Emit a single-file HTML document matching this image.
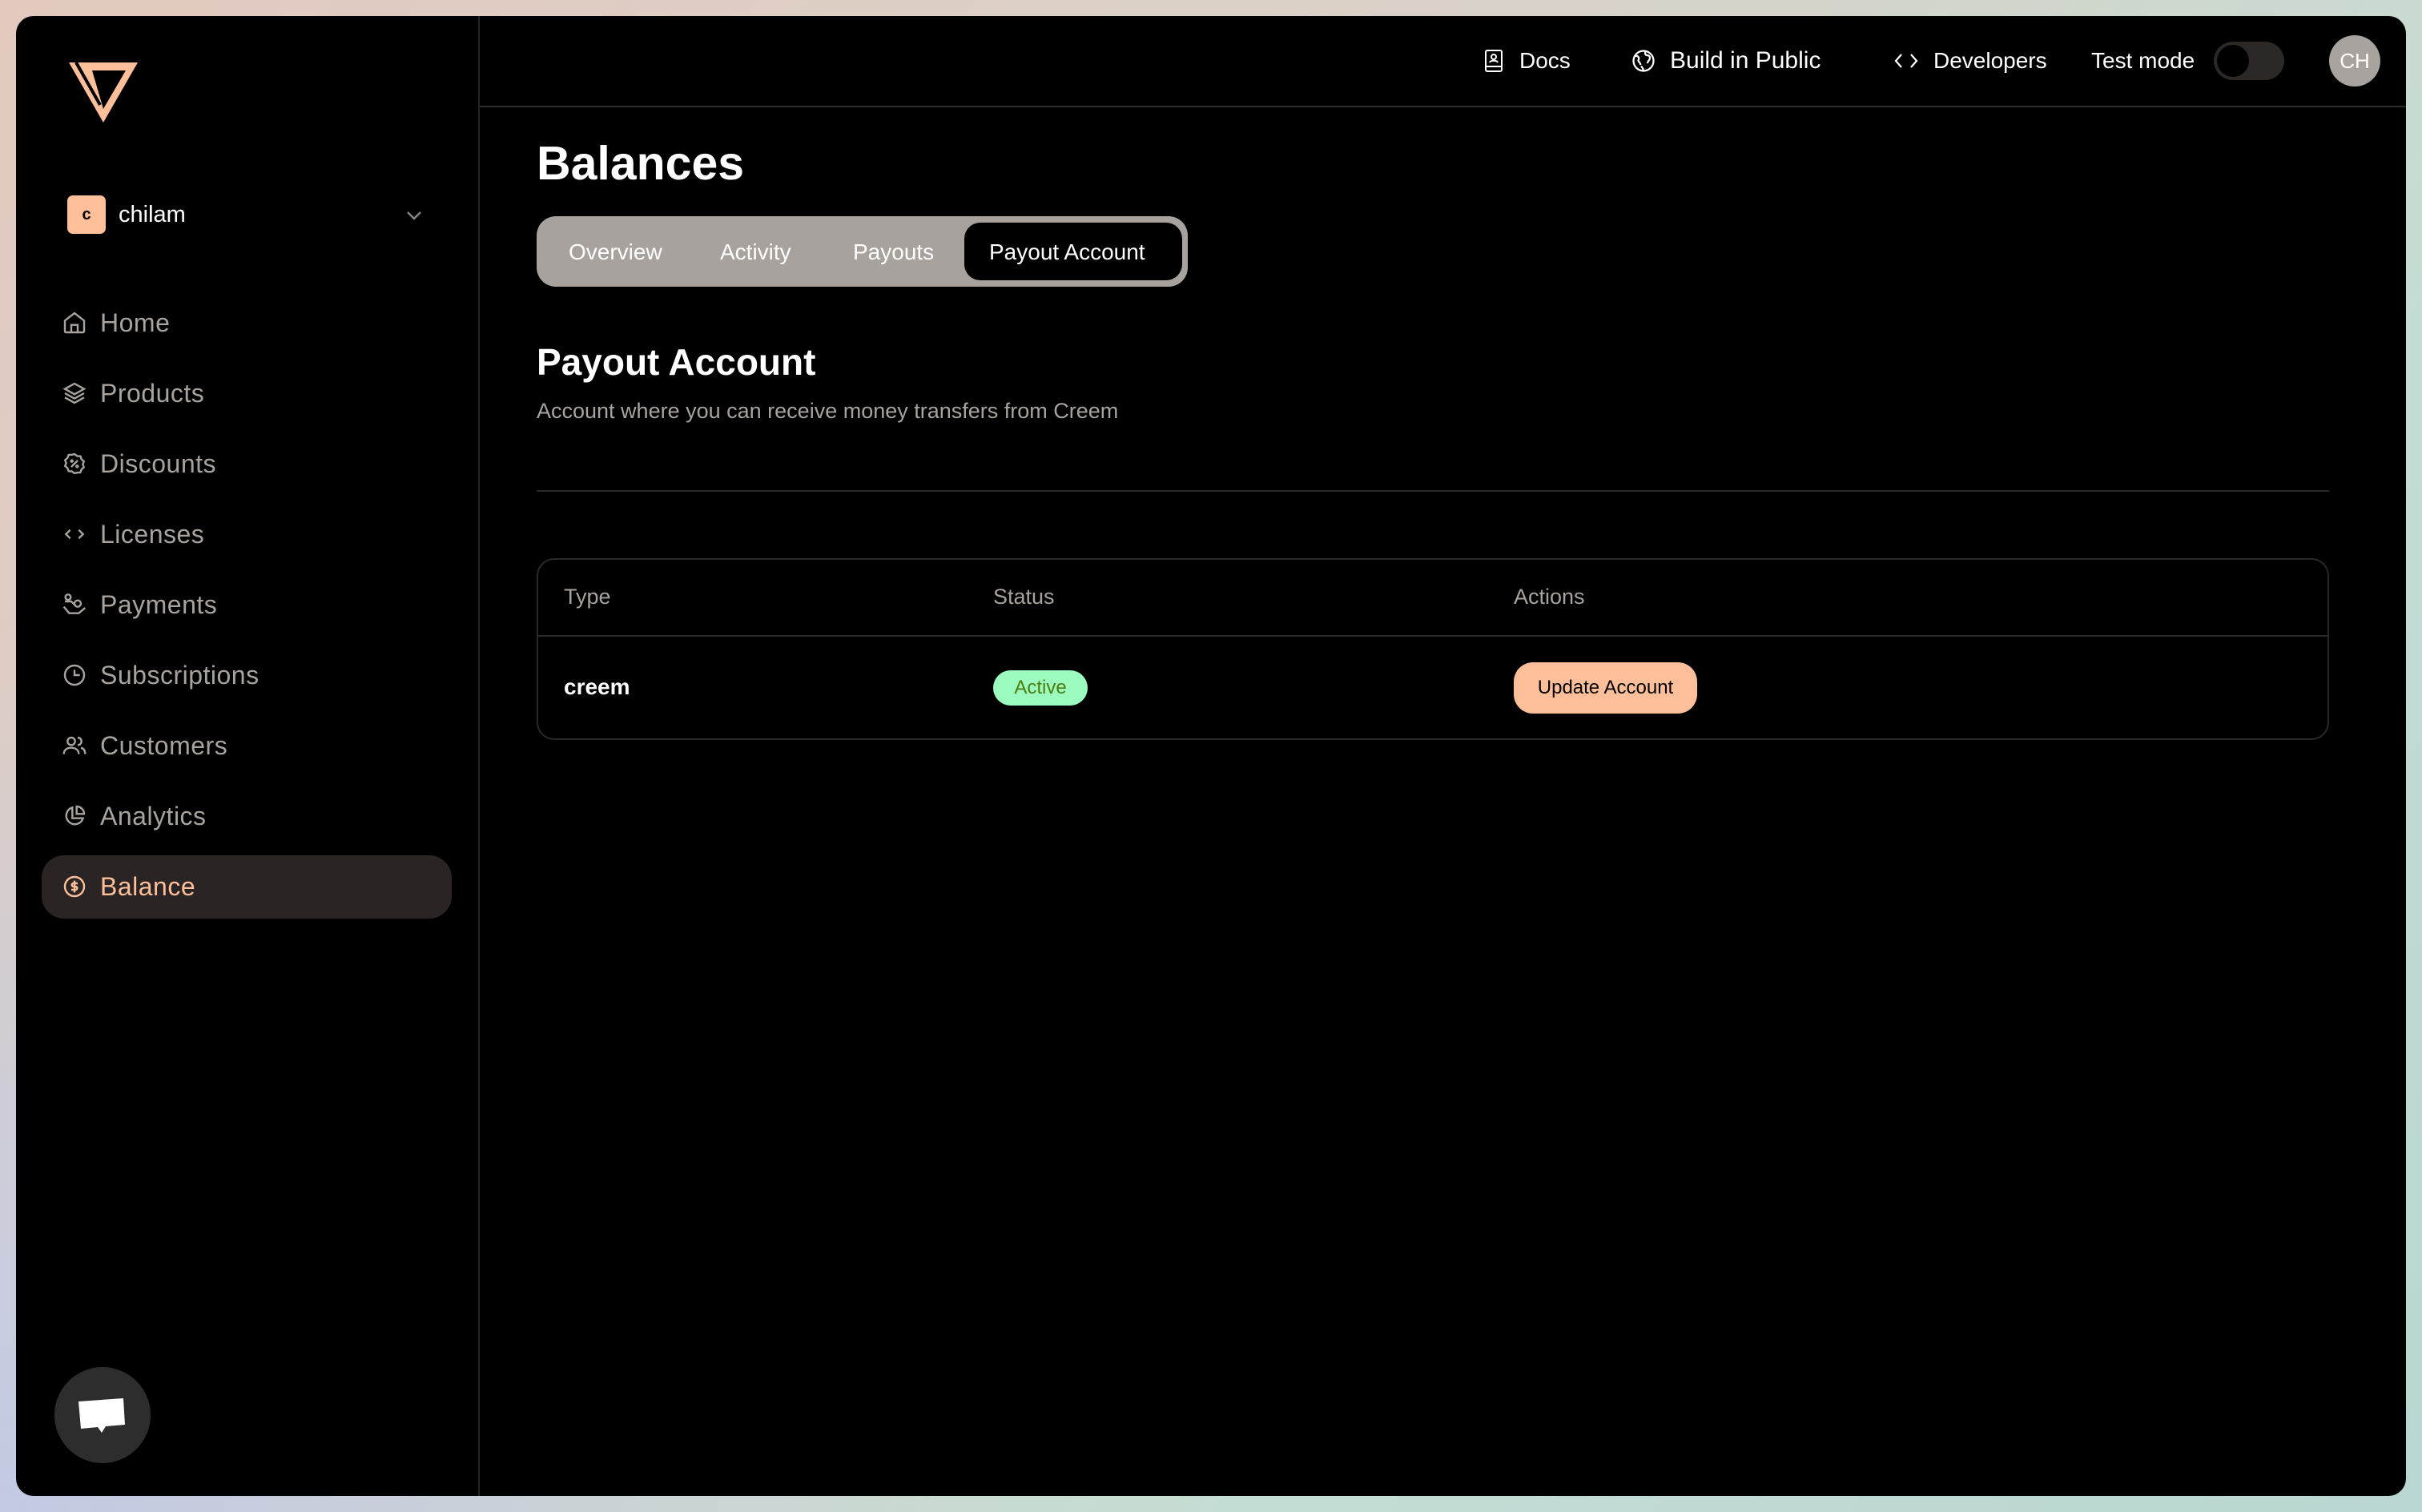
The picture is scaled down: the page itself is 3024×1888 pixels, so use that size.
<!DOCTYPE html>
<html><head><meta charset="utf-8"><style>
*{margin:0;padding:0;box-sizing:border-box}
html,body{width:3024px;height:1888px;overflow:hidden}
body{background:linear-gradient(135deg,#e3c9c0 0%,#d8d2c8 40%,#c4ddd4 70%,#b9d6d2 100%);font-family:"Liberation Sans",sans-serif;position:relative}
.bl{position:absolute;left:0;bottom:0;width:1200px;height:1100px;background:radial-gradient(ellipse at 0% 100%,#c2cae4 0%,rgba(194,202,228,0) 70%)}
.frame{position:absolute;left:20px;top:20px;width:2984px;height:1848px;background:#000;border-radius:22px;overflow:hidden}
.a{position:absolute;white-space:nowrap}
.nav{position:absolute;left:57px;height:40px;display:flex;align-items:center;color:#a8a39e;font-size:32px;letter-spacing:0.5px}
.nav svg{flex:none;margin-right:16px}
.hd{color:#fff;font-size:28px}
</style></head><body><div class="bl"></div>
<div class="frame">
<div class="a" style="left:577px;top:0;width:2px;height:1848px;background:#242222"></div>
<div class="a" style="left:579px;top:112px;width:2405px;height:2px;background:#2c2a2a"></div>
<!-- logo -->
<svg class="a" style="left:66px;top:58px" width="88" height="78" viewBox="0 0 88 78"><path d="M0 0H86L43 75Z" fill="#fdbf9a"/><path d="M29 10H71L43 58Z" fill="#000"/><path d="M9 0 L39 53" stroke="#000" stroke-width="4"/></svg>
<!-- org -->
<div class="a" style="left:64px;top:224px;width:48px;height:48px;background:#fdbf9a;border-radius:7px;color:#000;font-size:20px;text-align:center;line-height:48px;font-weight:bold">c</div>
<div class="a" style="left:128px;top:232px;color:#fff;font-size:29px">chilam</div>
<svg class="a" style="left:486px;top:242px" width="22" height="14" viewBox="0 0 22 14"><path d="M3 3l8 8 8-8" stroke="#8a8582" stroke-width="2.5" fill="none"/></svg>
<!-- nav -->
<div class="nav" style="top:363px"><svg width="32" height="32" viewBox="0 0 24 24" fill="none" stroke="#a8a39e" stroke-width="1.8"><path d="M3 10l9-7 9 7v10a1 1 0 0 1-1 1H4a1 1 0 0 1-1-1z M9 21v-7h6v7"/></svg>Home</div>
<div class="nav" style="top:451px"><svg width="32" height="32" viewBox="0 0 24 24" fill="none" stroke="#a8a39e" stroke-width="1.8"><path d="M12 3l9 5-9 5-9-5z M3 12l9 5 9-5 M3 16l9 5 9-5"/></svg>Products</div>
<div class="nav" style="top:539px"><svg width="32" height="32" viewBox="0 0 24 24" fill="none" stroke="#a8a39e" stroke-width="1.8"><path d="M12 3l2.5 1.8 3 .2 1 2.8 2.3 2-1 2.8 1 2.8-2.3 2-1 2.8-3 .2L12 21l-2.5-1.8-3-.2-1-2.8-2.3-2 1-2.8-1-2.8 2.3-2 1-2.8 3-.2z M9 15l6-6"/><circle cx="9.5" cy="9.5" r=".8"/><circle cx="14.5" cy="14.5" r=".8"/></svg>Discounts</div>
<div class="nav" style="top:627px"><svg width="32" height="32" viewBox="0 0 24 24" fill="none" stroke="#a8a39e" stroke-width="1.8"><path d="M8 8l-4 4 4 4 M16 8l4 4-4 4"/></svg>Licenses</div>
<div class="nav" style="top:715px"><svg width="32" height="32" viewBox="0 0 24 24" fill="none" stroke="#a8a39e" stroke-width="1.8"><circle cx="6" cy="5" r="2.5"/><circle cx="15" cy="11" r="3"/><path d="M2 14l5 6h9l6-5 M3 9h6l4 4"/></svg>Payments</div>
<div class="nav" style="top:803px"><svg width="32" height="32" viewBox="0 0 24 24" fill="none" stroke="#a8a39e" stroke-width="1.8"><circle cx="12" cy="12" r="9"/><path d="M12 7v5h5"/></svg>Subscriptions</div>
<div class="nav" style="top:891px"><svg width="32" height="32" viewBox="0 0 24 24" fill="none" stroke="#a8a39e" stroke-width="1.8"><circle cx="9" cy="8" r="3.5"/><path d="M2 20c0-4 3-6 7-6s7 2 7 6 M15 4.5a3.5 3.5 0 0 1 0 7 M18 14c2 .5 4 2 4 6"/></svg>Customers</div>
<div class="nav" style="top:979px"><svg width="32" height="32" viewBox="0 0 24 24" fill="none" stroke="#a8a39e" stroke-width="1.8"><path d="M10 4a8 8 0 1 0 10 10H10z M14 3v7h7a7 7 0 0 0-7-7z"/></svg>Analytics</div>
<div class="a" style="left:32px;top:1048px;width:512px;height:79px;background:#2a2524;border-radius:28px"></div>
<div class="nav" style="top:1067px;color:#fdbf9a"><svg width="32" height="32" viewBox="0 0 24 24" fill="none" stroke="#fdbf9a" stroke-width="1.8"><circle cx="12" cy="12" r="9"/><path d="M15 9h-4a1.5 1.5 0 0 0 0 3h2a1.5 1.5 0 0 1 0 3H9 M12 6.5v11"/></svg>Balance</div>
<!-- chat -->
<div class="a" style="left:48px;top:1687px;width:120px;height:120px;border-radius:50%;background:#2d2d2d"></div>
<svg class="a" style="left:78px;top:1723px" width="60" height="50" viewBox="0 0 60 50"><path d="M0 7 L56 3 L58 36 L34 38 L29 46 L24 39 L3 41 Z" fill="#fff"/></svg>
<!-- header -->
<svg class="a" style="left:1833px;top:41px" width="24" height="30" viewBox="0 0 24 30" fill="none" stroke="#fff" stroke-width="2"><rect x="2" y="2" width="20" height="26" rx="2"/><circle cx="12" cy="10" r="3"/><path d="M7 17c1-3 9-3 10 0 M2 22h20"/></svg>
<div class="a hd" style="left:1877px;top:40px">Docs</div>
<svg class="a" style="left:2017px;top:41px" width="30" height="30" viewBox="0 0 24 24" fill="none" stroke="#fff" stroke-width="1.8"><circle cx="12" cy="12" r="10"/><path d="M4 7c3 0 4 2 3 4s2 2 2 5 M14 2.5c-1 2 0 4 2 4s3 2 2 4-2 2-2 4 M12 22c0-3-2-3-2-5"/></svg>
<div class="a hd" style="left:2065px;top:39px;font-size:30px">Build in Public</div>
<svg class="a" style="left:2345px;top:44px" width="30" height="24" viewBox="0 0 30 24" fill="none" stroke="#fff" stroke-width="2.2"><path d="M9 4l-7 8 7 8 M21 4l7 8-7 8"/></svg>
<div class="a hd" style="left:2394px;top:40px">Developers</div>
<div class="a hd" style="left:2591px;top:40px">Test mode</div>
<div class="a" style="left:2744px;top:32px;width:88px;height:48px;border-radius:24px;background:#2c2827"></div>
<div class="a" style="left:2748px;top:36px;width:40px;height:40px;border-radius:50%;background:#000"></div>
<div class="a" style="left:2888px;top:24px;width:64px;height:64px;border-radius:50%;background:#a8a39e;color:#fff;font-size:26px;text-align:center;line-height:64px">CH</div>
<!-- content -->
<div class="a" style="left:650px;top:150px;color:#fff;font-size:59px;font-weight:bold">Balances</div>
<div class="a" style="left:650px;top:250px;width:813px;height:88px;background:#a7a29d;border-radius:24px"></div>
<div class="a" style="left:1184px;top:258px;width:272px;height:72px;background:#000;border-radius:20px"></div>
<div class="a" style="left:690px;top:279px;color:#fff;font-size:28px">Overview</div>
<div class="a" style="left:879px;top:279px;color:#fff;font-size:28px">Activity</div>
<div class="a" style="left:1045px;top:279px;color:#fff;font-size:28px">Payouts</div>
<div class="a" style="left:1215px;top:279px;color:#fff;font-size:28px">Payout Account</div>
<div class="a" style="left:650px;top:405px;color:#fff;font-size:46px;font-weight:bold">Payout Account</div>
<div class="a" style="left:650px;top:478px;color:#a8a39e;font-size:27px">Account where you can receive money transfers from Creem</div>
<div class="a" style="left:650px;top:592px;width:2238px;height:2px;background:#2c2828"></div>
<div class="a" style="left:650px;top:677px;width:2238px;height:227px;border:2px solid #2c2828;border-radius:22px"></div>
<div class="a" style="left:652px;top:773px;width:2234px;height:2px;background:#2c2828"></div>
<div class="a" style="left:684px;top:710px;color:#a8a39e;font-size:27px">Type</div>
<div class="a" style="left:1220px;top:710px;color:#a8a39e;font-size:27px">Status</div>
<div class="a" style="left:1870px;top:710px;color:#a8a39e;font-size:27px">Actions</div>
<div class="a" style="left:684px;top:822px;color:#fff;font-size:28px;font-weight:bold">creem</div>
<div class="a" style="left:1220px;top:817px;width:118px;height:44px;border-radius:22px;background:#9cfcbf;color:#4d7c0f;font-size:24px;text-align:center;line-height:44px">Active</div>
<div class="a" style="left:1870px;top:807px;width:229px;height:64px;border-radius:24px;background:#fdbf9a;color:#000;font-size:24px;text-align:center;line-height:64px">Update Account</div>
</div>
</body></html>
